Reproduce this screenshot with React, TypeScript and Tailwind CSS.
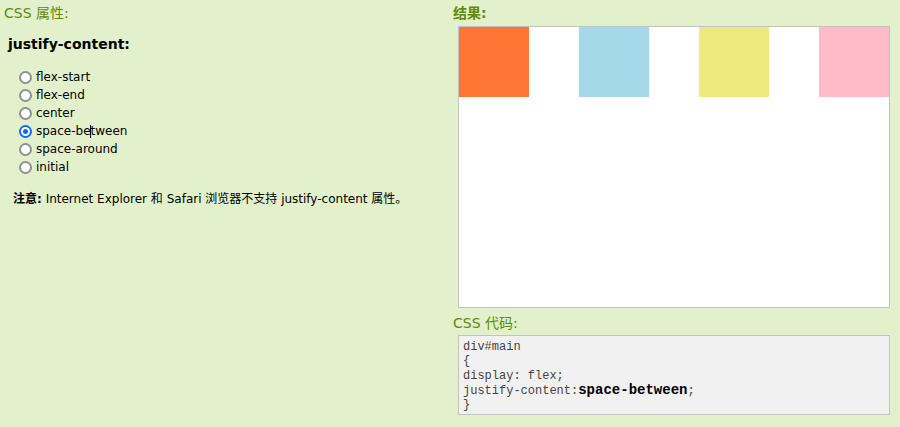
import React from "react";

const opts = ["flex-start", "flex-end", "center", "space-between", "space-around", "initial"];

function Radio({ checked }: { checked: boolean }) {
  return checked ? (
    <span className="inline-flex h-[13px] w-[13px] shrink-0 items-center justify-center rounded-full bg-[#0a6cff]">
      <span className="h-[9px] w-[9px] rounded-full bg-white flex items-center justify-center">
        <span className="h-[5px] w-[5px] rounded-full bg-[#0a6cff]" />
      </span>
    </span>
  ) : (
    <span className="inline-block h-[13px] w-[13px] shrink-0 rounded-full border-2 border-[#8f8f96] bg-white" />
  );
}

export default function App() {
  return (
    <div
      className="h-[427px] w-[900px] bg-[#e2f0cb] flex text-black"
      style={{ fontFamily: '"DejaVu Sans", Verdana, "Noto Sans CJK SC", sans-serif' }}
    >
      <div className="w-[453px] pl-[4px] pt-[4px]">
        <div className="text-[14px] leading-[18px] text-[#5f8a0a]">CSS 属性:</div>
        <div className="mt-[13px] ml-[4px] text-[14px] leading-[18px] font-bold">justify-content:</div>
        <div className="mt-[15px] ml-[15px] flex flex-col">
          {opts.map((o) => (
            <label key={o} className="flex h-[18px] items-center gap-[4px] text-[12px]">
              <Radio checked={o === "space-between"} />
              <span className="relative">
                {o === "space-between" ? (
                  <>
                    space-be<span className="inline-block h-[13px] w-px bg-black align-middle -mx-[0.5px]" />tween
                  </>
                ) : (
                  o
                )}
              </span>
            </label>
          ))}
        </div>
        <div className="mt-[16px] ml-[9px] text-[12px] leading-[15px]">
          <b>注意:</b> Internet Explorer 和 Safari 浏览器不支持 justify-content 属性。
        </div>
      </div>
      <div className="w-[437px] pt-[4px]">
        <div className="text-[14px] leading-[18px] text-[#5f8a0a] font-bold">结果:</div>
        <div className="mt-[4px] ml-[5px] h-[282px] w-[432px] border border-[#c2c2c2] bg-white flex justify-between items-start">
          <div className="h-[70px] w-[70px] bg-[#ff7635]" />
          <div className="h-[70px] w-[70px] bg-[#a5d9e9]" />
          <div className="h-[70px] w-[70px] bg-[#eee97d]" />
          <div className="h-[70px] w-[70px] bg-[#ffbbc8]" />
        </div>
        <div className="mt-[6px] text-[14px] leading-[18px] text-[#5f8a0a]">CSS 代码:</div>
        <div
          className="mt-[3px] ml-[5px] h-[80px] w-[432px] border border-[#c2c2c2] bg-[#f1f1f1] px-[4px] pt-[4px] text-[12px] leading-[14.25px] text-[#444]"
          style={{ fontFamily: '"Liberation Mono", "Courier New", monospace' }}
        >
          <div>div#main</div>
          <div>{"{"}</div>
          <div>display: flex;</div>
          <div>
            justify-content:<b className="text-[14px] text-black">space-between</b>;
          </div>
          <div>{"}"}</div>
        </div>
      </div>
    </div>
  );
}
